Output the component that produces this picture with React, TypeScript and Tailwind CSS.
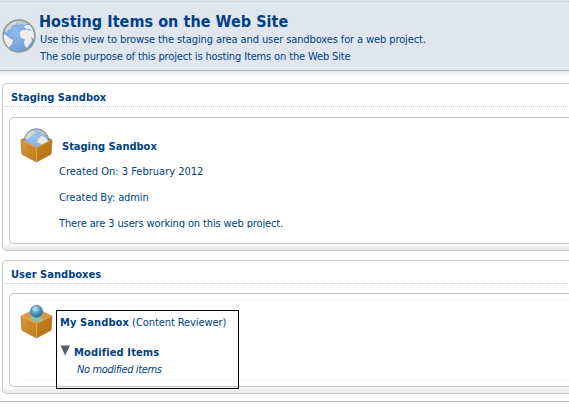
import type { ReactNode } from "react";

const regular = "font-['DejaVu_Sans_Condensed','DejaVu_Sans',sans-serif] [font-stretch:condensed]";

function Globe({ className }: { className: string }) {
  return (
    <svg viewBox="0 0 34 34" className={className}>
      <defs>
        <radialGradient id="sea" cx=".4" cy=".35" r=".7">
          <stop offset="0" stopColor="#8db9ec" />
          <stop offset=".7" stopColor="#79a6dc" />
          <stop offset="1" stopColor="#6f9bce" />
        </radialGradient>
      </defs>
      <circle cx="17" cy="17" r="16" fill="url(#sea)" />
      <path d="M3 12 5 7 9 4l5-2 1 2-2 2-3 1-1 3-3 1-2 3z" fill="#d3d6d3" />
      <path d="M13 2l5-1 8 3-3 2-4-1-3 1z" fill="#c5cac8" />
      <path d="M1 15l3 1 3 3 4 2-1 4-3 3-1 2-3-5-2-6z" fill="#eeefec" />
      <path d="M18 13l2-2 3 0 2-1-3-2 2-2 4 0 3 5 2 6-1 3-3-2 1 4-3 4-2 3-2-2-1-4 1-3-4-1-1-3z" fill="#eeefec" />
      <path d="M25 9.500l4 1 0 1.500-4-1z" fill="#8fb7e3" />
      <circle cx="17" cy="17" r="16" fill="none" stroke="#92988f" strokeWidth="1.4" />
    </svg>
  );
}

function Box({ user = false }: { user?: boolean }) {
  return (
    <svg viewBox="0 0 34 36" preserveAspectRatio="none" className="h-[35px] w-[33px] shrink-0">
      <defs>
        <linearGradient id="left" x1="0" y1="0" x2="1" y2="1">
          <stop stopColor="#d9983e" />
          <stop offset="1" stopColor="#c07c16" />
        </linearGradient>
        <linearGradient id="right" x1="0" y1="0" x2="1" y2="1">
          <stop stopColor="#c98625" />
          <stop offset="1" stopColor="#b06c0b" />
        </linearGradient>
        <radialGradient id="ball" cx=".4" cy=".3" r=".7">
          <stop stopColor="#c6e5f5" />
          <stop offset=".5" stopColor="#5b9fca" />
          <stop offset="1" stopColor="#246b9f" />
        </radialGradient>
        <radialGradient id="water" cx=".4" cy=".3" r=".8">
          <stop stopColor="#9cc8f1" />
          <stop offset="1" stopColor="#6f9fd3" />
        </radialGradient>
      </defs>
      <path d="M1 12 17 4l16 8-16 8z" fill={user ? "#d59a4e" : "#a76a1b"} />
      {!user && (
        <>
          <circle cx="17" cy="13.500" r="12.7" fill="url(#water)" stroke="#858c89" />
          <path d="M5 11q2-6 9-9l2 3-4 3-3 3z" fill="#d5d7d2" />
          <path d="M15 2q8-1 12 5l-5 1-2-3z" fill="#b9c0c1" />
          <path d="M18 12l4-4 5 2 2 4-6 3-5-2z" fill="#e5e8e5" />
        </>
      )}
      <path d="M1 12l16 8v15L2 27z" fill="url(#left)" />
      <path d="M33 12l-16 8v15l15-8z" fill="url(#right)" />
      <path d="M1 12l16 8 16-8M17 20v15" fill="none" stroke="#e2a650" strokeWidth=".8" />
      <path d="M1 12l1 15 15 8 15-8 1-15" fill="none" stroke="#9e6414" strokeWidth=".6" />
      {user && (
        <>
          <path d="M10 14l4-1h6l4 1-1 3-3 1h-6l-3-2z" fill="#86c4a4" />
          <circle cx="17" cy="7.500" r="6.300" fill="url(#ball)" stroke="#32769f" strokeWidth=".6" />
        </>
      )}
    </svg>
  );
}

function Dots() {
  return <div className="h-px shrink-0 bg-[repeating-linear-gradient(90deg,#c3c7c9_0_1px,transparent_1px_2px)]" />;
}

function Panel({ title, inset, className, children }: { title: string; inset: string; className: string; children: ReactNode }) {
  return (
    <section className={`ml-0.5 flex shrink-0 flex-col rounded-l-[5px] border-y border-l border-[#c1c9cf] bg-[linear-gradient(to_top,#e4e7e9_0,#fff_7px)] ${className}`}>
      <h2 className="h-[22px] shrink-0 pl-2 pt-1.5 text-[11px] leading-4 font-bold tracking-[0.03px]">{title}</h2>
      <Dots />
      <div className={`mb-1.5 ml-1.5 flex min-h-0 flex-1 rounded-l-[5px] border-y border-l border-[#c5c7c8] bg-white pl-2.5 ${inset}`}>
        {children}
      </div>
    </section>
  );
}

export default function App() {
  return (
    <main className={`flex h-[413px] w-[569px] flex-col overflow-hidden bg-white text-[11px] text-[#003f87] whitespace-nowrap ${regular}`}>
      <header className="h-[71px] shrink-0 border-b border-[#a9b2ba] bg-[#dfe6ee] pt-px">
        <Dots />
        <div className="flex">
          <Globe className="mt-[17px] ml-[1.5px] size-[34px] shrink-0" />
          <div className="ml-[3.5px] pt-[9px]">
            <h1 className="h-[21px] text-[16px] leading-[22px] font-bold tracking-[0.05px]">Hosting Items on the Web Site</h1>
            <p className="h-[17px] pl-px leading-4 tracking-[-0.105px]">Use this view to browse the staging area and user sandboxes for a web project.</p>
            <p className="h-[17px] pl-px leading-4 tracking-[-0.14px]">The sole purpose of this project is hosting Items on the Web Site</p>
          </div>
        </div>
      </header>
      <div className="h-3 shrink-0 bg-[linear-gradient(#e7e8e9,#fff_6px)]" />
      <Panel title="Staging Sandbox" inset="mt-2.5" className="h-[168px]">
        <div className="mt-[10px]"><Box /></div>
        <div className="ml-1.5 pt-[21px]">
          <h3 className="ml-[3px] h-[25px] leading-4 font-bold">Staging Sandbox</h3>
          <p className="h-[26px] leading-4">Created On: 3 February 2012</p>
          <p className="h-[26px] leading-4 tracking-[-0.12px]">Created By: admin</p>
          <p className="h-[12px] overflow-hidden leading-4 tracking-[-0.13px]">There are 3 users working on this web project.</p>
        </div>
      </Panel>
      <div className="h-[9px] shrink-0" />
      <Panel title="User Sandboxes" inset="mt-[9px]" className="h-[134px]">
        <div className="mt-1.5 flex h-20 flex-1 border-y border-[#f7f7f7]">
          <div className="mt-[3px]"><Box user /></div>
          <div className="z-10 mt-[9px] ml-[3px] h-[79px] w-[183px] shrink-0 border border-black pt-1 pl-[3px]">
            <p className="h-[30px] leading-4"><b className="tracking-[0.1px]">My Sandbox</b> <span className="tracking-[-0.08px]">(Content Reviewer)</span></p>
            <h3 className="flex h-[17px] leading-4 font-bold tracking-[0.14px]">
              <svg viewBox="0 0 10 10" className="mr-1 h-[11px] w-2.5"><path d="M0.500 0h9.500L5.200 10z" fill="#555f68" /></svg>
              Modified Items
            </h3>
            <p className="pl-[17px] leading-4 tracking-[-0.35px] italic">No modified items</p>
          </div>
        </div>
      </Panel>
      <div className="mt-[7px] h-px shrink-0 bg-[#b6bbc0]" />
    </main>
  );
}
